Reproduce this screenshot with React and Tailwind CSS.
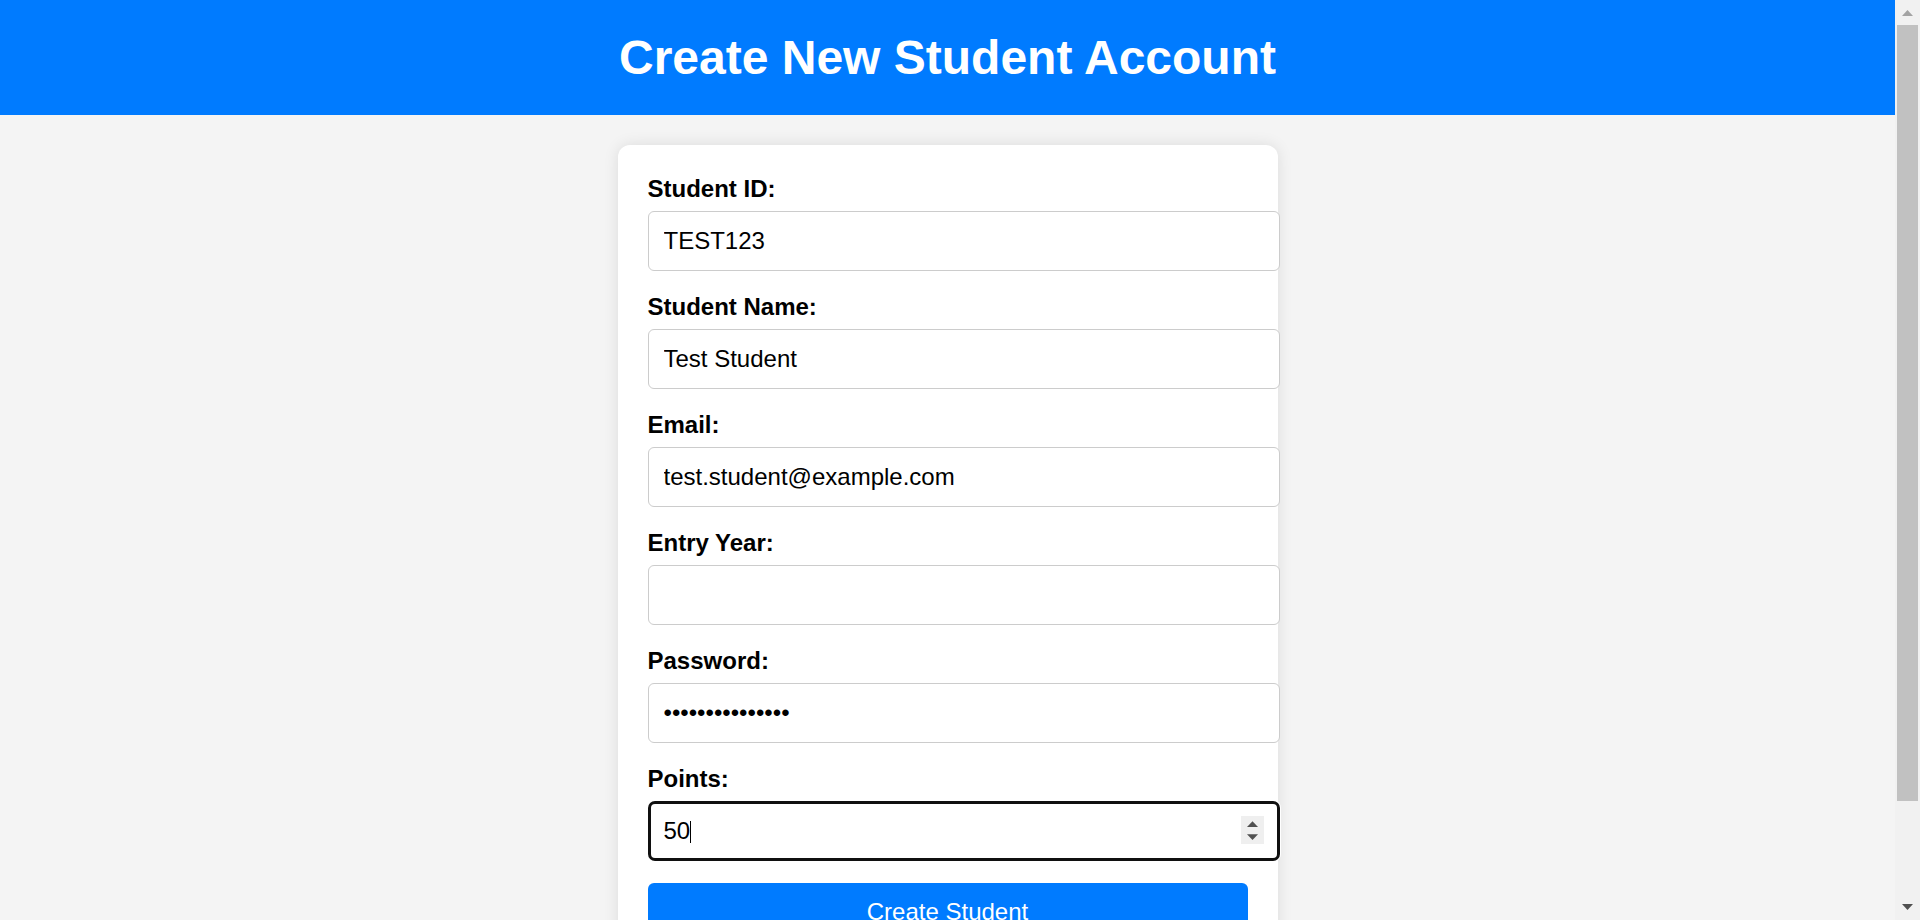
import React from "react";

const fields = [
  { label: "Student ID:", value: "TEST123", type: "text" },
  { label: "Student Name:", value: "Test Student", type: "text" },
  { label: "Email:", value: "test.student@example.com", type: "text" },
  { label: "Entry Year:", value: "", type: "text" },
  { label: "Password:", value: "testpassword123", type: "password" },
];

export default function App() {
  return (
    <div className="flex h-[920px] overflow-hidden bg-[#f4f4f4] font-['Liberation_Sans',Arial,sans-serif] text-black">
      <main className="min-w-0 flex-1">
        <header className="bg-[#007bff] py-[30px] text-center">
          <h1 className="text-[48px] font-bold leading-[55px] text-white">Create New Student Account</h1>
        </header>
        <div className="mx-auto mt-[30px] w-[660px] rounded-[12px] bg-white p-[30px] shadow-[0_0_15px_rgba(0,0,0,0.1)]">
          <form onSubmit={(e) => e.preventDefault()}>
            {fields.map((f) => (
              <div key={f.label} className="mb-[22px]">
                <label className="mb-[8px] block text-[24px] font-bold leading-[28px]">{f.label}</label>
                <input
                  type={f.type}
                  defaultValue={f.value}
                  readOnly
                  className="block h-[60px] w-[632px] rounded-[6px] border border-[#ccc] bg-white px-[15px] text-[24px] leading-[28px] text-black outline-none"
                />
              </div>
            ))}
            <div className="mb-[22px]">
              <label className="mb-[8px] block text-[24px] font-bold leading-[28px]">Points:</label>
              <div className="relative w-[632px]">
                <input
                  type="text"
                  defaultValue="50"
                  readOnly
                  className="block h-[60px] w-[632px] rounded-[7px] border-[3px] border-[#101010] bg-white pl-[13px] pr-[40px] text-[24px] leading-[28px] text-black shadow-[0_0_0_1px_#ffffff] outline-none"
                />
                <span className="pointer-events-none absolute left-[42px] top-[20px] h-[22px] w-px bg-black" />
                <svg
                  className="pointer-events-none absolute right-[16px] top-[15px]"
                  width="23"
                  height="28"
                  viewBox="0 0 23 28"
                >
                  <rect x="0" y="0" width="23" height="28" fill="#efefef" />
                  <polygon points="6,11 17,11 11.5,5.3" fill="#505050" />
                  <polygon points="6,18.3 17,18.3 11.5,24" fill="#505050" />
                </svg>
              </div>
            </div>
            <button
              type="submit"
              className="block w-full rounded-[6px] bg-[#007bff] py-[15px] text-center text-[24px] leading-[28px] text-white"
            >
              Create Student
            </button>
          </form>
        </div>
      </main>
      <aside className="flex w-[25px] shrink-0 flex-col items-center bg-[#f1f1f1] pt-[10px]">
        <svg width="11" height="6" viewBox="0 0 11 6">
          <polygon points="0,6 11,6 5.5,0" fill="#a3a3a3" />
        </svg>
        <div className="mt-[9px] h-[776px] w-[21px] bg-[#c1c1c1]" />
        <svg className="mt-[103px]" width="11" height="6" viewBox="0 0 11 6">
          <polygon points="0,0 11,0 5.5,6" fill="#505050" />
        </svg>
      </aside>
    </div>
  );
}
